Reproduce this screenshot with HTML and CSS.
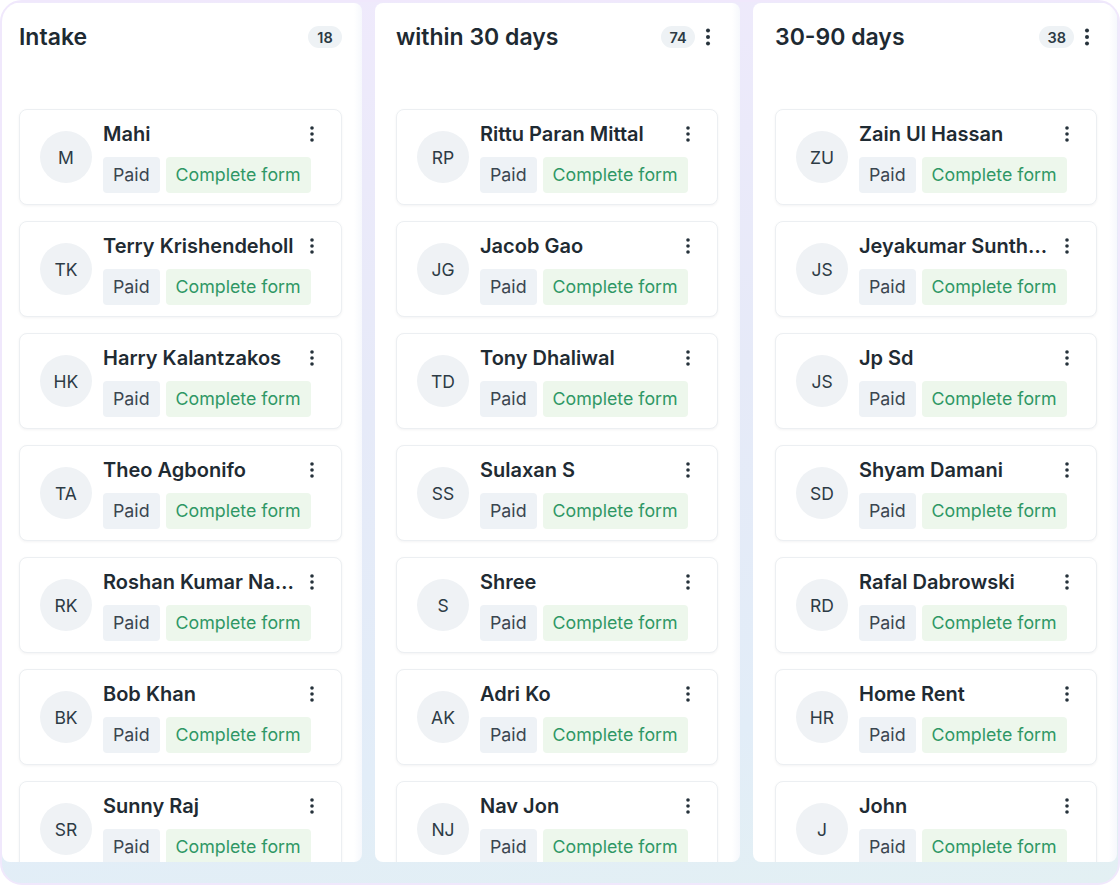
FILE: index.html
```html
<!DOCTYPE html>
<html lang="en">
<head>
    <meta charset="UTF-8">
    <meta name="viewport" content="width=device-width, initial-scale=1.0">
    <title>Pipeline</title>
    <link rel="stylesheet" href="styles.css">
</head>
<body>
    <div class="board">
        <section class="column column-first">
            <div class="col-head">
                <h2 class="col-title">Intake</h2>
                <span class="count">18</span>
            </div>
            <div class="list">
                <div class="card"><div class="avatar">M</div><div class="info"><div class="name-row"><span class="name">Mahi</span><svg class="kebab" viewBox="0 0 16 20"><circle cx="8" cy="4" r="1.8"/><circle cx="8" cy="10" r="1.8"/><circle cx="8" cy="16" r="1.8"/></svg></div><div class="tags"><span class="tag tag-paid">Paid</span><span class="tag tag-form">Complete form</span></div></div></div>
                <div class="card"><div class="avatar">TK</div><div class="info"><div class="name-row"><span class="name">Terry Krishendeholl</span><svg class="kebab" viewBox="0 0 16 20"><circle cx="8" cy="4" r="1.8"/><circle cx="8" cy="10" r="1.8"/><circle cx="8" cy="16" r="1.8"/></svg></div><div class="tags"><span class="tag tag-paid">Paid</span><span class="tag tag-form">Complete form</span></div></div></div>
                <div class="card"><div class="avatar">HK</div><div class="info"><div class="name-row"><span class="name">Harry Kalantzakos</span><svg class="kebab" viewBox="0 0 16 20"><circle cx="8" cy="4" r="1.8"/><circle cx="8" cy="10" r="1.8"/><circle cx="8" cy="16" r="1.8"/></svg></div><div class="tags"><span class="tag tag-paid">Paid</span><span class="tag tag-form">Complete form</span></div></div></div>
                <div class="card"><div class="avatar">TA</div><div class="info"><div class="name-row"><span class="name">Theo Agbonifo</span><svg class="kebab" viewBox="0 0 16 20"><circle cx="8" cy="4" r="1.8"/><circle cx="8" cy="10" r="1.8"/><circle cx="8" cy="16" r="1.8"/></svg></div><div class="tags"><span class="tag tag-paid">Paid</span><span class="tag tag-form">Complete form</span></div></div></div>
                <div class="card"><div class="avatar">RK</div><div class="info"><div class="name-row"><span class="name">Roshan Kumar Na…</span><svg class="kebab" viewBox="0 0 16 20"><circle cx="8" cy="4" r="1.8"/><circle cx="8" cy="10" r="1.8"/><circle cx="8" cy="16" r="1.8"/></svg></div><div class="tags"><span class="tag tag-paid">Paid</span><span class="tag tag-form">Complete form</span></div></div></div>
                <div class="card"><div class="avatar">BK</div><div class="info"><div class="name-row"><span class="name">Bob Khan</span><svg class="kebab" viewBox="0 0 16 20"><circle cx="8" cy="4" r="1.8"/><circle cx="8" cy="10" r="1.8"/><circle cx="8" cy="16" r="1.8"/></svg></div><div class="tags"><span class="tag tag-paid">Paid</span><span class="tag tag-form">Complete form</span></div></div></div>
                <div class="card"><div class="avatar">SR</div><div class="info"><div class="name-row"><span class="name">Sunny Raj</span><svg class="kebab" viewBox="0 0 16 20"><circle cx="8" cy="4" r="1.8"/><circle cx="8" cy="10" r="1.8"/><circle cx="8" cy="16" r="1.8"/></svg></div><div class="tags"><span class="tag tag-paid">Paid</span><span class="tag tag-form">Complete form</span></div></div></div>
            </div>
        </section>

        <section class="column">
            <div class="col-head">
                <h2 class="col-title">within 30 days</h2>
                <span class="count">74</span>
                <svg class="head-kebab" viewBox="0 0 20 24"><circle cx="10" cy="5.5" r="2"/><circle cx="10" cy="12" r="2"/><circle cx="10" cy="18.5" r="2"/></svg>
            </div>
            <div class="list">
                <div class="card"><div class="avatar">RP</div><div class="info"><div class="name-row"><span class="name">Rittu Paran Mittal</span><svg class="kebab" viewBox="0 0 16 20"><circle cx="8" cy="4" r="1.8"/><circle cx="8" cy="10" r="1.8"/><circle cx="8" cy="16" r="1.8"/></svg></div><div class="tags"><span class="tag tag-paid">Paid</span><span class="tag tag-form">Complete form</span></div></div></div>
                <div class="card"><div class="avatar">JG</div><div class="info"><div class="name-row"><span class="name">Jacob Gao</span><svg class="kebab" viewBox="0 0 16 20"><circle cx="8" cy="4" r="1.8"/><circle cx="8" cy="10" r="1.8"/><circle cx="8" cy="16" r="1.8"/></svg></div><div class="tags"><span class="tag tag-paid">Paid</span><span class="tag tag-form">Complete form</span></div></div></div>
                <div class="card"><div class="avatar">TD</div><div class="info"><div class="name-row"><span class="name">Tony Dhaliwal</span><svg class="kebab" viewBox="0 0 16 20"><circle cx="8" cy="4" r="1.8"/><circle cx="8" cy="10" r="1.8"/><circle cx="8" cy="16" r="1.8"/></svg></div><div class="tags"><span class="tag tag-paid">Paid</span><span class="tag tag-form">Complete form</span></div></div></div>
                <div class="card"><div class="avatar">SS</div><div class="info"><div class="name-row"><span class="name">Sulaxan S</span><svg class="kebab" viewBox="0 0 16 20"><circle cx="8" cy="4" r="1.8"/><circle cx="8" cy="10" r="1.8"/><circle cx="8" cy="16" r="1.8"/></svg></div><div class="tags"><span class="tag tag-paid">Paid</span><span class="tag tag-form">Complete form</span></div></div></div>
                <div class="card"><div class="avatar">S</div><div class="info"><div class="name-row"><span class="name">Shree</span><svg class="kebab" viewBox="0 0 16 20"><circle cx="8" cy="4" r="1.8"/><circle cx="8" cy="10" r="1.8"/><circle cx="8" cy="16" r="1.8"/></svg></div><div class="tags"><span class="tag tag-paid">Paid</span><span class="tag tag-form">Complete form</span></div></div></div>
                <div class="card"><div class="avatar">AK</div><div class="info"><div class="name-row"><span class="name">Adri Ko</span><svg class="kebab" viewBox="0 0 16 20"><circle cx="8" cy="4" r="1.8"/><circle cx="8" cy="10" r="1.8"/><circle cx="8" cy="16" r="1.8"/></svg></div><div class="tags"><span class="tag tag-paid">Paid</span><span class="tag tag-form">Complete form</span></div></div></div>
                <div class="card"><div class="avatar">NJ</div><div class="info"><div class="name-row"><span class="name">Nav Jon</span><svg class="kebab" viewBox="0 0 16 20"><circle cx="8" cy="4" r="1.8"/><circle cx="8" cy="10" r="1.8"/><circle cx="8" cy="16" r="1.8"/></svg></div><div class="tags"><span class="tag tag-paid">Paid</span><span class="tag tag-form">Complete form</span></div></div></div>
            </div>
        </section>

        <section class="column column-last">
            <div class="col-head">
                <h2 class="col-title">30-90 days</h2>
                <span class="count">38</span>
                <svg class="head-kebab" viewBox="0 0 20 24"><circle cx="10" cy="5.5" r="2"/><circle cx="10" cy="12" r="2"/><circle cx="10" cy="18.5" r="2"/></svg>
            </div>
            <div class="list">
                <div class="card"><div class="avatar">ZU</div><div class="info"><div class="name-row"><span class="name">Zain Ul Hassan</span><svg class="kebab" viewBox="0 0 16 20"><circle cx="8" cy="4" r="1.8"/><circle cx="8" cy="10" r="1.8"/><circle cx="8" cy="16" r="1.8"/></svg></div><div class="tags"><span class="tag tag-paid">Paid</span><span class="tag tag-form">Complete form</span></div></div></div>
                <div class="card"><div class="avatar">JS</div><div class="info"><div class="name-row"><span class="name">Jeyakumar Sunth…</span><svg class="kebab" viewBox="0 0 16 20"><circle cx="8" cy="4" r="1.8"/><circle cx="8" cy="10" r="1.8"/><circle cx="8" cy="16" r="1.8"/></svg></div><div class="tags"><span class="tag tag-paid">Paid</span><span class="tag tag-form">Complete form</span></div></div></div>
                <div class="card"><div class="avatar">JS</div><div class="info"><div class="name-row"><span class="name">Jp Sd</span><svg class="kebab" viewBox="0 0 16 20"><circle cx="8" cy="4" r="1.8"/><circle cx="8" cy="10" r="1.8"/><circle cx="8" cy="16" r="1.8"/></svg></div><div class="tags"><span class="tag tag-paid">Paid</span><span class="tag tag-form">Complete form</span></div></div></div>
                <div class="card"><div class="avatar">SD</div><div class="info"><div class="name-row"><span class="name">Shyam Damani</span><svg class="kebab" viewBox="0 0 16 20"><circle cx="8" cy="4" r="1.8"/><circle cx="8" cy="10" r="1.8"/><circle cx="8" cy="16" r="1.8"/></svg></div><div class="tags"><span class="tag tag-paid">Paid</span><span class="tag tag-form">Complete form</span></div></div></div>
                <div class="card"><div class="avatar">RD</div><div class="info"><div class="name-row"><span class="name">Rafal Dabrowski</span><svg class="kebab" viewBox="0 0 16 20"><circle cx="8" cy="4" r="1.8"/><circle cx="8" cy="10" r="1.8"/><circle cx="8" cy="16" r="1.8"/></svg></div><div class="tags"><span class="tag tag-paid">Paid</span><span class="tag tag-form">Complete form</span></div></div></div>
                <div class="card"><div class="avatar">HR</div><div class="info"><div class="name-row"><span class="name">Home Rent</span><svg class="kebab" viewBox="0 0 16 20"><circle cx="8" cy="4" r="1.8"/><circle cx="8" cy="10" r="1.8"/><circle cx="8" cy="16" r="1.8"/></svg></div><div class="tags"><span class="tag tag-paid">Paid</span><span class="tag tag-form">Complete form</span></div></div></div>
                <div class="card"><div class="avatar">J</div><div class="info"><div class="name-row"><span class="name">John</span><svg class="kebab" viewBox="0 0 16 20"><circle cx="8" cy="4" r="1.8"/><circle cx="8" cy="10" r="1.8"/><circle cx="8" cy="16" r="1.8"/></svg></div><div class="tags"><span class="tag tag-paid">Paid</span><span class="tag tag-form">Complete form</span></div></div></div>
            </div>
        </section>
    </div>
</body>
</html>
```

FILE: styles.css
```css
*{
    box-sizing: border-box;
    margin: 0;
}
body{
    background-color: #ffffff;
    font-family: Inter, "Noto Sans", sans-serif;
    overflow: hidden;
}
.board{
    height: 885px;
    border: 2px solid #f0e8fc;
    border-radius: 22px;
    background: linear-gradient(172deg, #f0eafc 0%, #e6eaf8 45%, #e2edf8 80%, #e3f0f3 100%);
    padding: 1px 1px 21px 0;
    display: grid;
    grid-template-columns: 360px 365px 364px;
    column-gap: 13px;
    overflow: hidden;
}
.column{
    background: linear-gradient(90deg, #ffffff calc(100% - 8px), #f6f8fc);
    border-radius: 8px;
    overflow: hidden;
    padding: 20px 22px 0 21px;
}
.column-first{
    padding-left: 17px;
    padding-right: 20px;
}
.column-last{
    padding-left: 22px;
    padding-right: 20px;
}
.col-head{
    display: flex;
    align-items: center;
    height: 28px;
    margin-bottom: 58px;
}
.col-title{
    flex: 1;
    font-size: 23px;
    font-weight: 600;
    color: #1e2a32;
}
.count{
    height: 22px;
    min-width: 34px;
    padding: 0 8px;
    border-radius: 11px;
    background-color: #eef2f5;
    color: #2c3a44;
    font-size: 14.5px;
    font-weight: 600;
    display: flex;
    align-items: center;
    justify-content: center;
}
.head-kebab{
    width: 20px;
    height: 24px;
    margin-left: 3px;
    fill: #26323b;
}
.list{
    display: flex;
    flex-direction: column;
    gap: 16px;
}
.card{
    flex: none;
    height: 96px;
    background-color: #ffffff;
    border: 1px solid #eceff2;
    border-radius: 8px;
    box-shadow: 0 1px 3px rgba(16, 24, 40, 0.05);
    display: flex;
    align-items: center;
    gap: 11px;
    padding: 0 21px 0 20px;
}
.avatar{
    flex: none;
    width: 52px;
    height: 52px;
    border-radius: 50%;
    background-color: #eff2f5;
    color: #2d3b45;
    font-size: 17.5px;
    display: flex;
    align-items: center;
    justify-content: center;
}
.info{
    flex: 1;
    min-width: 0;
    display: flex;
    flex-direction: column;
    gap: 11px;
}
.name-row{
    display: flex;
    align-items: center;
    gap: 2px;
    height: 24px;
}
.name{
    flex: 1;
    min-width: 0;
    font-size: 20px;
    font-weight: 600;
    color: #1f2b33;
    white-space: nowrap;
    overflow: hidden;
    text-overflow: ellipsis;
}
.kebab{
    flex: none;
    width: 16px;
    height: 20px;
    fill: #26323b;
}
.tags{
    display: flex;
    gap: 6px;
}
.tag{
    height: 36px;
    padding: 0 10px;
    border-radius: 4px;
    font-size: 17.8px;
    display: flex;
    align-items: center;
}
.tag-paid{
    background-color: #eef2f6;
    color: #3b4650;
}
.tag-form{
    background-color: #edf7ec;
    color: #2f9765;
}
```
